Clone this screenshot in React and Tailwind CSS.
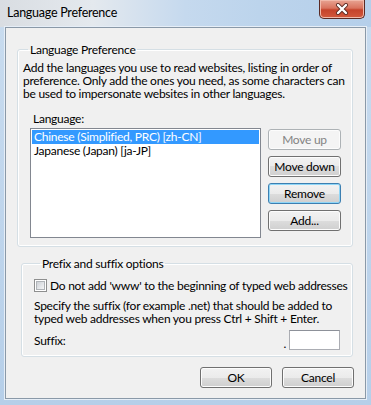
import React from "react";

const font = { fontFamily: 'Lato, "Segoe UI", sans-serif' };

function Btn({ children, variant = "normal", className = "" }) {
  let cls =
    "flex items-center justify-center rounded-[3px] border text-[12px] leading-none ";
  if (variant === "disabled") {
    cls += "border-[#adb2b5] bg-[#f4f4f4] text-[#838383] shadow-[inset_0_0_0_1px_#fcfcfc]";
  } else if (variant === "focus") {
    cls +=
      "text-black border-[#3c7fb1] bg-[linear-gradient(to_bottom,#f2f2f2_0%,#ebebeb_50%,#dddddd_50%,#cfcfcf_100%)] shadow-[inset_0_0_0_1px_#8fd6f7]";
  } else {
    cls +=
      "text-black border-[#707070] bg-[linear-gradient(to_bottom,#f2f2f2_0%,#ebebeb_50%,#dddddd_50%,#cfcfcf_100%)] shadow-[inset_0_0_0_1px_#fcfcfc]";
  }
  return <div className={cls + " " + className}>{children}</div>;
}

export default function App() {
  return (
    <div
      className="relative w-[371px] h-[405px] overflow-hidden tracking-[-0.25px] bg-[linear-gradient(to_bottom,#c9dcef,#b6cfe9)]"
      style={font}
    >
      {/* title bar */}
      <div className="h-[27px] flex items-start bg-[linear-gradient(to_right,#d9dde2_0%,#e4e9ee_25%,#c5d9ee_50%,#bcd4ec_70%,#b5cfea_100%)]">
        <div className="pl-[7px] pt-[4px] text-[12.5px] leading-[18px] text-black">
          Language Preference
        </div>
        <div className="ml-auto mr-[6px] w-[46px] h-[19px] rounded-b-[5px] border border-t-0 border-[#5a2a24] bg-[linear-gradient(to_bottom,#e8a493_0%,#d9735e_45%,#c5432b_55%,#d2583c_100%)] shadow-[inset_0_0_0_1px_#f1b9aa] flex items-center justify-center">
          <svg width="14" height="12" viewBox="0 0 14 12">
            <path
              d="M3 2 L11 10 M11 2 L3 10"
              stroke="#5b2a22"
              strokeWidth="4"
              strokeLinecap="round"
            />
            <path
              d="M3 2 L11 10 M11 2 L3 10"
              stroke="#ffffff"
              strokeWidth="2.4"
              strokeLinecap="round"
            />
          </svg>
        </div>
      </div>

      {/* content panel */}
      <div className="absolute left-[5px] top-[27px] w-[361px] h-[372px] border border-[#8a99a8] bg-[#f0f0f0] shadow-[0_0_0_1px_#e6eef7]">
        <div className="flex flex-col pt-[14px]">
          {/* group 1 */}
          <fieldset className="min-w-0 ml-[11px] w-[336px] h-[205px] border border-[#d5dfe5] rounded-[3px] shadow-[inset_0_0_0_1px_#fff] px-[5px]">
            <legend className="ml-[5px] px-[2px] text-[12px] leading-[15px] text-black">
              Language Preference
            </legend>
            <p className="mt-[4px] text-[12px] leading-[13px] text-black">
              Add the languages you use to read websites, listing in order of
              preference. Only add the ones you need, as some characters can be
              used to impersonate websites in other languages.
            </p>
            <div className="mt-[12px] pl-[10px] text-[12px] leading-[13px] text-black">
              Language:
            </div>
            <div className="mt-[3px] flex gap-[7px] pl-[7px]">
              <div className="w-[231px] h-[110px] border border-[#828790] bg-white p-[1px]">
                <div className="h-[14px] bg-[#3399ff] text-white text-[12px] leading-[14px] pl-[2px]">
                  Chinese (Simplified, PRC) [zh-CN]
                </div>
                <div className="h-[13px] text-black text-[12px] leading-[13px] pl-[2px]">
                  Japanese (Japan) [ja-JP]
                </div>
              </div>
              <div className="flex flex-col gap-[6px] pt-[1px]">
                <Btn variant="disabled" className="w-[73px] h-[21px]">
                  Move up
                </Btn>
                <Btn className="w-[73px] h-[21px]">Move down</Btn>
                <Btn variant="focus" className="w-[73px] h-[21px]">
                  Remove
                </Btn>
                <Btn className="w-[73px] h-[21px]">Add...</Btn>
              </div>
            </div>
          </fieldset>

          {/* group 2 */}
          <fieldset className="min-w-0 mt-[9px] ml-[15px] w-[332px] h-[101px] border border-[#d5dfe5] rounded-[3px] shadow-[inset_0_0_0_1px_#fff] pl-[12px] pr-[12px]">
            <legend className="ml-[6px] px-[2px] text-[12px] leading-[15px] text-black">
              Prefix and suffix options
            </legend>
            <div className="mt-[8px] flex items-center gap-[3px]">
              <div className="shrink-0 w-[13px] h-[13px] border border-[#8e8f8f] bg-white p-[1px]">
                <div className="w-full h-full border border-[#b0b4b8] bg-[linear-gradient(135deg,#cdd1d6,#f5f6f7)]" />
              </div>
              <span className="whitespace-nowrap text-[12px] leading-[13px] text-black">
                Do not add 'www' to the beginning of typed web addresses
              </span>
            </div>
            <p className="mt-[7px] text-[12px] leading-[13px] text-black">
              Specify the suffix (for example .net) that should be added to
              typed web addresses when you press Ctrl + Shift + Enter.
            </p>
            <div className="mt-[5px] flex items-center">
              <span className="text-[12px] leading-[13px] text-black">Suffix:</span>
              <span className="ml-auto mt-[6px] text-[12px] leading-[13px] text-black">.</span>
              <div className="ml-[3px] w-[51px] h-[20px] border border-[#abadb3] border-t-[#8d9199] bg-white" />
            </div>
          </fieldset>

          {/* footer */}
          <div className="mt-[10px] flex justify-end gap-[10px] pr-[11px]">
            <Btn className="w-[72px] h-[21px]">OK</Btn>
            <Btn className="w-[72px] h-[21px]">Cancel</Btn>
          </div>
        </div>
      </div>
    </div>
  );
}
